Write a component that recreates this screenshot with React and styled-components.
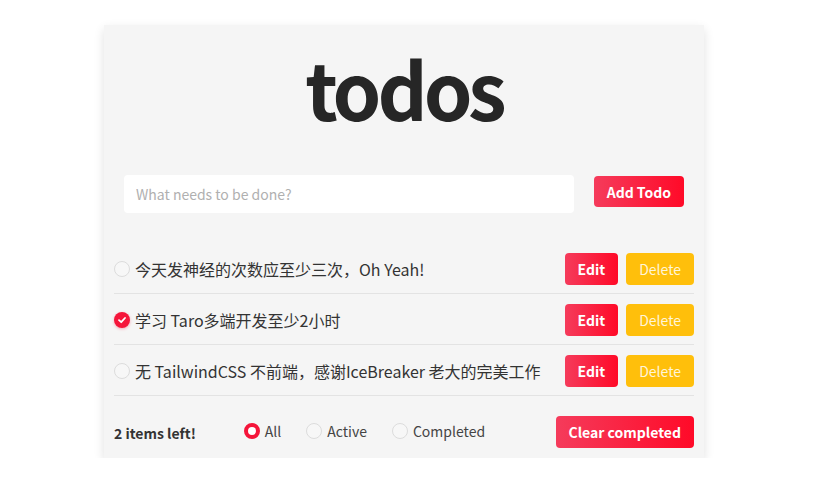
import React, { useState } from 'react';
import styled, { createGlobalStyle } from 'styled-components';

const GlobalStyle = createGlobalStyle`
  body {
    margin: 0;
    background: #ffffff;
    font-family: "Noto Sans CJK SC", "Noto Sans", sans-serif;
    color: #333333;
  }
`;

const redGradient = 'linear-gradient(90deg, #f53b5b 0%, #ff0a28 100%)';

const Card = styled.section`
  width: 600px;
  margin: 25px 0 0 104px;
  padding: 0 10px 10px;
  box-sizing: border-box;
  background: #f5f5f5;
  box-shadow: 0 4px 10px rgba(0, 0, 0, 0.12);
`;

const Title = styled.h1`
  margin: 0;
  padding-top: 12px;
  font-size: 78px;
  line-height: 100px;
  letter-spacing: -4px;
  font-weight: 700;
  text-align: center;
  color: #262626;
`;

const Form = styled.form`
  display: flex;
  align-items: flex-start;
  gap: 20px;
  padding: 0 10px;
  margin-top: 38px;
`;

const Input = styled.input`
  flex: 1;
  height: 38px;
  padding: 0 12px;
  border: none;
  border-radius: 4px;
  background: #ffffff;
  font-family: inherit;
  font-size: 14px;
  color: #333;
  outline: none;

  &::placeholder {
    color: #b0b0b0;
  }
`;

const Button = styled.button`
  height: ${(p) => p.$h || 32}px;
  margin-top: ${(p) => p.$mt || 0}px;
  padding: 0 13px;
  border: none;
  border-radius: 4px;
  background: ${(p) => (p.$amber ? '#ffbf0b' : redGradient)};
  color: ${(p) => (p.$amber ? '#fff5d8' : '#ffffff')};
  font-family: inherit;
  font-size: 14px;
  font-weight: ${(p) => (p.$amber ? 400 : 700)};
  white-space: nowrap;
  cursor: pointer;
`;

const List = styled.ul`
  list-style: none;
  margin: 30px 0 0;
  padding: 0;
`;

const Row = styled.li`
  display: flex;
  align-items: center;
  height: 51px;
  border-bottom: 1px solid #e3e3e3;
  box-sizing: border-box;
  padding-top: 1px;
`;

const Check = styled.span`
  flex: none;
  width: 16px;
  height: 16px;
  border-radius: 50%;
  box-sizing: border-box;
  border: ${(p) => (p.$on ? 'none' : '1px solid #dcdcdc')};
  background: ${(p) => (p.$on ? '#f5153a' : '#f7f7f7')};
  display: flex;
  align-items: center;
  justify-content: center;
  box-shadow: ${(p) => (p.$on ? '0 1px 3px rgba(245, 21, 58, 0.35)' : 'none')};
`;

const Text = styled.span`
  flex: 1;
  margin-left: 5px;
  font-size: 16px;
  color: #333333;
`;

const Actions = styled.div`
  display: flex;
  gap: 8px;
`;

const Footer = styled.footer`
  display: flex;
  align-items: center;
  padding: 20px 0 0;
`;

const Count = styled.strong`
  font-size: 14px;
  font-weight: 700;
  color: #333;
  padding-top: 2px;
`;

const Filters = styled.div`
  display: flex;
  align-items: center;
  gap: 25px;
  margin-left: 48px;
`;

const Filter = styled.label`
  display: flex;
  align-items: center;
  gap: 5px;
  font-size: 14px;
  color: #444;
  cursor: pointer;
  margin-top: -3px;
`;

const Radio = styled.span`
  width: 16px;
  height: 16px;
  border-radius: 50%;
  box-sizing: border-box;
  border: ${(p) => (p.$on ? '4px solid #f5153a' : '1px solid #dcdcdc')};
  background: ${(p) => (p.$on ? '#ffffff' : '#f7f7f7')};
`;

const Spacer = styled.div`
  flex: 1;
`;

const todos = [
  { id: 1, text: '今天发神经的次数应至少三次，Oh Yeah!', done: false },
  { id: 2, text: '学习 Taro多端开发至少2小时', done: true },
  { id: 3, text: '无 TailwindCSS 不前端，感谢IceBreaker 老大的完美工作', done: false },
];

const CheckMark = () => (
  <svg width="10" height="10" viewBox="0 0 10 10">
    <path d="M2 5.2 L4.2 7.2 L8 3" fill="none" stroke="#fff" strokeWidth="1.8" strokeLinecap="round" strokeLinejoin="round" />
  </svg>
);

const App = () => {
  const [filter, setFilter] = useState('All');

  return (
    <>
      <GlobalStyle />
      <Card>
        <Title>todos</Title>
        <Form onSubmit={(e) => e.preventDefault()}>
          <Input placeholder="What needs to be done?" />
          <Button $h={31} $mt={1} type="submit">Add Todo</Button>
        </Form>
        <List>
          {todos.map((t) => (
            <Row key={t.id}>
              <Check $on={t.done}>{t.done && <CheckMark />}</Check>
              <Text>{t.text}</Text>
              <Actions>
                <Button>Edit</Button>
                <Button $amber>Delete</Button>
              </Actions>
            </Row>
          ))}
        </List>
        <Footer>
          <Count>2 items left!</Count>
          <Filters>
            {['All', 'Active', 'Completed'].map((f) => (
              <Filter key={f} onClick={() => setFilter(f)}>
                <Radio $on={filter === f} />
                {f}
              </Filter>
            ))}
          </Filters>
          <Spacer />
          <Button>Clear completed</Button>
        </Footer>
      </Card>
    </>
  );
};

export default App;
